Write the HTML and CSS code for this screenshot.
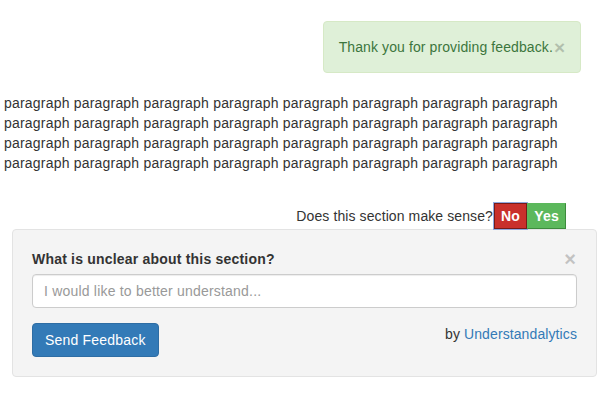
FILE: index.html
```html
<!DOCTYPE html>
<html>
<head>
<meta charset="utf-8">
<link rel="stylesheet" href="styles.css">
</head>
<body>
<div class="alert-row">
  <div class="alert">Thank you for providing feedback.<span class="close alert-close">×</span></div>
</div>
<p class="para">paragraph paragraph paragraph paragraph paragraph paragraph paragraph paragraph paragraph paragraph paragraph paragraph paragraph paragraph paragraph paragraph paragraph paragraph paragraph paragraph paragraph paragraph paragraph paragraph paragraph paragraph paragraph paragraph paragraph paragraph paragraph paragraph</p>
<div class="question-row">
  <span class="question">Does this section make sense?</span><button class="btn-no">No</button><button class="btn-yes">Yes</button>
</div>
<div class="well">
  <div class="well-head">
    <span class="well-title">What is unclear about this section?</span>
    <span class="close well-close">×</span>
  </div>
  <div class="input">I would like to better understand...</div>
  <div class="well-foot">
    <button class="btn-send">Send Feedback</button>
    <span class="by">by <span class="link">Understandalytics</span></span>
  </div>
</div>
</body>
</html>
```
FILE: styles.css
```css
html, body {
  margin: 0;
  padding: 0;
  background: #fff;
  font-family: "Liberation Sans", Arial, sans-serif;
  font-size: 14px;
  line-height: 20px;
  letter-spacing: 0.2px;
  color: #333;
}
.alert-row {
  display: flex;
  justify-content: flex-end;
  padding: 21px 34px 0 0;
}
.alert {
  display: flex;
  align-items: center;
  background: #dff0d8;
  border: 1px solid #d6e9c6;
  border-radius: 4px;
  color: #3c763d;
  padding: 15px 15px 15px 15px;
  height: 20px;
  letter-spacing: 0.1px;
}
.close {
  font-weight: bold;
  color: #000;
  opacity: 0.2;
  font-size: 21px;
  line-height: 1;
  letter-spacing: 0;
}
.alert-close {
  margin-left: 1px;
  font-size: 19px;
}
.para {
  margin: 20px 0 0 4px;
  width: 560px;
}
.question-row {
  display: flex;
  justify-content: flex-end;
  align-items: center;
  margin: 30px 49px 0 0;
  height: 26px;
}
.question {
  margin-right: 1px;
  letter-spacing: 0.1px;
}
.btn-no, .btn-yes {
  font-family: "Liberation Sans", Arial, sans-serif;
  font-weight: bold;
  font-size: 14px;
  line-height: 20px;
  letter-spacing: 0.2px;
  color: #fff;
  padding: 2px 6px;
  border-radius: 0;
  margin: 0;
}
.btn-no {
  background: #c9302c;
  border: 1px solid #761c19;
  outline: 1px solid #8fa8e0;
  height: 26px;
  width: 33px;
}
.btn-yes {
  background: #5cb85c;
  border: 1px solid #3d8b3d;
  border-top-color: #5cb85c;
  border-left-color: #5cb85c;
  height: 26px;
  width: 39px;
}
.well {
  margin: 0 18px 0 12px;
  background: #f4f4f4;
  border: 1px solid #e3e3e3;
  border-radius: 4px;
  padding: 17px 19px 19px 19px;
  height: 110px;
}
.well-head {
  display: flex;
  justify-content: space-between;
  align-items: center;
  height: 24px;
  margin-bottom: 3px;
}
.well-title {
  font-weight: bold;
  color: #333;
}
.well-close {
  margin-right: 1px;
  font-size: 20px;
}
.input {
  height: 32px;
  border: 1px solid #ccc;
  border-radius: 4px;
  background: #fff;
  color: #999;
  padding: 0 11px;
  line-height: 32px;
  box-shadow: inset 0 1px 1px rgba(0,0,0,.075);
}
.well-foot {
  display: flex;
  justify-content: space-between;
  align-items: flex-start;
  margin-top: 15px;
}
.btn-send {
  font-family: "Liberation Sans", Arial, sans-serif;
  font-size: 14px;
  line-height: 20px;
  letter-spacing: 0.2px;
  color: #fff;
  background: #337ab7;
  border: 1px solid #2e6da4;
  border-radius: 4px;
  padding: 6px 12px;
  height: 34px;
  margin: 0;
}
.by {
  margin-top: 1px;
  letter-spacing: 0.1px;
}
.link {
  color: #337ab7;
}
```
